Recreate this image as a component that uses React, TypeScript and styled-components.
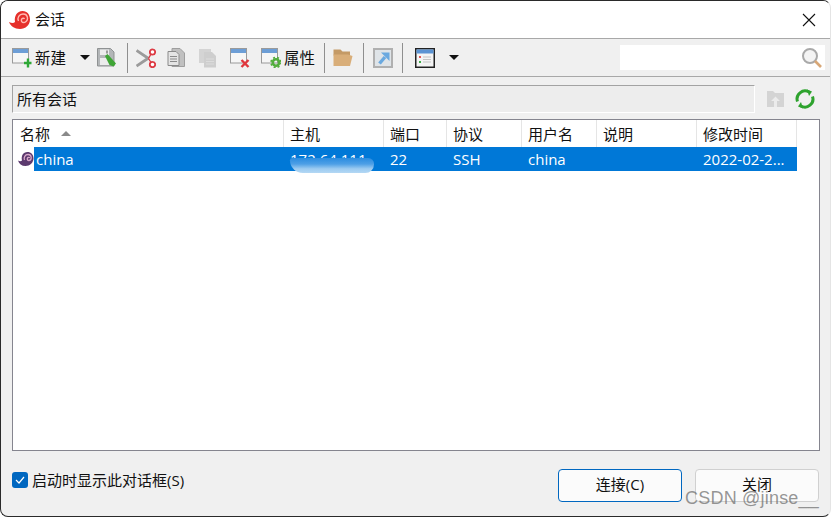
import React from 'react';
import styled, { createGlobalStyle } from 'styled-components';

const GlobalStyle = createGlobalStyle`
  html, body {
    margin: 0;
    padding: 0;
    background: #ffffff;
  }
  body {
    font-family: "Open Sans", "Noto Sans CJK SC", sans-serif;
    font-size: 15px;
    color: #111;
  }
`;

const Desktop = styled.div`
  width: 832px;
  height: 517px;
  background: #fff;
  overflow: hidden;
`;

const Window = styled.div`
  position: relative;
  box-sizing: border-box;
  width: 831px;
  height: 517px;
  display: flex;
  flex-direction: column;
  background: #f0f0f0;
  border: 1px solid #2a2a2a;
  border-right-color: #e4e4e4;
  border-radius: 8px;
  overflow: hidden;
`;

const TitleBar = styled.div`
  height: 37px;
  flex: none;
  display: flex;
  align-items: center;
  padding: 0 8px;
  gap: 4px;
  background: #fff;
  border-bottom: 1px solid #a8a8a8;
`;

const TitleText = styled.span`
  flex: 1;
  font-size: 15px;
  padding-bottom: 2px;
`;

const CloseButton = styled.div`
  width: 14px;
  height: 14px;
  margin-right: 6px;
  display: flex;
`;

const Toolbar = styled.div`
  height: 37px;
  flex: none;
  display: flex;
  align-items: center;
  padding: 0 5px 0 11px;
  border-bottom: 1px solid #a8a8a8;
`;

const ToolIcon = styled.div<{ $mr?: number }>`
  width: 20px;
  height: 20px;
  flex: none;
  margin-right: ${(p) => p.$mr ?? 0}px;
  display: flex;
`;

const ToolLabel = styled.span`
  width: 31px;
  flex: none;
  font-size: 15.5px;
  margin-left: 3px;
  white-space: nowrap;
`;

const Separator = styled.div<{ $l: number; $r: number }>`
  width: 1px;
  height: 30px;
  flex: none;
  background: #8f8f8f;
  margin-left: ${(p) => p.$l}px;
  margin-right: ${(p) => p.$r}px;
`;

const Caret = styled.div<{ $l: number; $r: number }>`
  width: 0;
  height: 0;
  flex: none;
  margin-left: ${(p) => p.$l}px;
  margin-right: ${(p) => p.$r}px;
  border-left: 5px solid transparent;
  border-right: 5px solid transparent;
  border-top: 5px solid #111;
`;

const SearchBox = styled.div`
  margin-left: auto;
  width: 205px;
  height: 25px;
  background: #fff;
  display: flex;
  align-items: center;
  justify-content: flex-end;
  padding-right: 2px;
  box-sizing: border-box;
`;

const PathRow = styled.div`
  flex: none;
  display: flex;
  align-items: center;
  padding: 8px 0 0 11px;
`;

const PathBox = styled.div`
  width: 743px;
  height: 28px;
  box-sizing: border-box;
  background: #ededed;
  border: 1px solid #a3a3a3;
  border-right-color: #fff;
  border-bottom-color: #fff;
  padding-left: 4px;
  font-size: 15px;
  line-height: 26px;
`;

const PathActions = styled.div`
  display: flex;
  align-items: center;
  margin-left: 11px;
  gap: 9px;
`;

const ListPanel = styled.div`
  flex: none;
  margin: 6px 0 0 11px;
  width: 808px;
  height: 332px;
  box-sizing: border-box;
  background: #fff;
  border: 1px solid #85858f;
`;

const HeaderRow = styled.div`
  display: grid;
  grid-template-columns: 271px 100px 63px 75px 75px 100px 100px;
  height: 26px;
  width: 784px;
`;

const HeaderCell = styled.div`
  box-sizing: border-box;
  border-right: 1px solid #e5e5e5;
  padding-left: 6px;
  font-size: 15px;
  line-height: 28px;
  display: flex;
  align-items: center;
  gap: 11px;
  white-space: nowrap;

  &:first-child {
    padding-left: 7px;
  }
`;

const SortArrow = styled.span`
  width: 0;
  height: 0;
  border-left: 5px solid transparent;
  border-right: 5px solid transparent;
  border-bottom: 5px solid #8a8a8a;
  margin-bottom: 2px;
`;

const SessionRow = styled.div`
  position: relative;
  display: flex;
  height: 24px;
  margin-top: 1px;
`;

const RowIcon = styled.div`
  width: 21px;
  flex: none;
  display: flex;
  align-items: center;
  padding-left: 5px;
  box-sizing: border-box;
`;

const Selection = styled.div`
  display: grid;
  grid-template-columns: 250px 100px 63px 75px 75px 100px 100px;
  width: 763px;
  background: #0078d7;
  color: #fff;
`;

const Cell = styled.div<{ $pl?: number }>`
  padding-left: ${(p) => p.$pl ?? 6}px;
  font-size: 15px;
  line-height: 25px;
  white-space: nowrap;
  overflow: hidden;
`;

const Blur = styled.div`
  position: absolute;
  left: 277px;
  top: 11px;
  width: 84px;
  height: 15px;
  background: linear-gradient(180deg, #2a8ce0 0%, #4d9fe6 40%, #9ccbf1 72%, #b4d8f4 100%);
  border-radius: 3px 8px 12px 18px;
`;

const Footer = styled.div`
  flex: 1;
  display: flex;
  align-items: center;
  padding: 3px 11px 0 11px;
`;

const CheckRow = styled.label`
  display: flex;
  align-items: center;
  gap: 4px;
  font-size: 15px;
  margin-bottom: 11px;
`;

const CheckBox = styled.span`
  width: 16px;
  height: 16px;
  border-radius: 3px;
  background: #0067c0;
  display: flex;
  align-items: center;
  justify-content: center;
`;

const DialogButton = styled.div<{ $primary?: boolean }>`
  width: 124px;
  height: 33px;
  box-sizing: border-box;
  margin-left: ${(p) => (p.$primary ? 'auto' : '13px')};
  padding-bottom: 3px;
  border: 1px solid ${(p) => (p.$primary ? '#0067c0' : '#d0d0d0')};
  border-radius: 4px;
  background: #fbfbfb;
  font-size: 15px;
  display: flex;
  align-items: center;
  justify-content: center;
`;

const Watermark = styled.div`
  position: absolute;
  right: 11px;
  bottom: 7px;
  font-family: "Liberation Sans", sans-serif;
  font-size: 18px;
  color: rgba(110, 110, 110, 0.72);
  letter-spacing: 0.2px;
`;

const Shell = () => (
  <svg width="22" height="20" viewBox="0 0 22 20">
    <path d="M0 12c3 1.500 5 1 6 0C5 6 8 1 13.500 1 18.500 1 21 5 21 9.500 21 15 16.500 19 11 19 5.500 19 1.500 16 0 12z" fill="#e6302b" />
    <path d="M9.500 11c-1.500-3 .500-7 4.500-7 3 0 4.500 2 4.500 4.500S16 12.500 14.500 12.500 12 11 12.500 9.500s2.500-1.500 3-.5" fill="none" stroke="#ffb8b0" strokeWidth="1.400" />
  </svg>
);

const RowShell = () => (
  <svg width="16" height="16" viewBox="0 0 16 16">
    <path d="M0 9.500c1.500 1 3 1 4 0C3 5 5 1 9.500 1 13 1 15.500 3.500 15.500 7.500 15.500 11.500 12 15 7.500 15 3.500 15 1 13 0 9.500z" fill="#5c3a6e" />
    <path d="M6.500 9C5.500 6.500 7 3.500 10 3.500c2 0 3.200 1.500 3.200 3.300S12 9.500 10.800 9.500 9 8.500 9.400 7.300s2-1 2.200-.3" fill="none" stroke="#d9a7c9" strokeWidth="1.300" />
  </svg>
);

const WinIcon = ({ badge }: { badge?: React.ReactNode }) => (
  <svg width="20" height="20" viewBox="0 0 20 20">
    <rect x="0.500" y="0.500" width="16" height="14.500" fill="#f6f6f6" stroke="#9a9a9a" />
    <rect x="1" y="1" width="15" height="4" fill="#6d9ed6" />
    {badge}
  </svg>
);

const Save = () => (
  <svg width="20" height="20" viewBox="0 0 20 20">
    <path d="M0.500 0.500h13l3.500 3.500v14H0.500z" fill="#b3b6b8" stroke="#8f9293" />
    <rect x="3" y="1.500" width="9" height="5.500" fill="#ececec" />
    <rect x="9" y="2.500" width="2" height="3" fill="#9a9a9a" />
    <rect x="3" y="10" width="10" height="7" fill="#ececec" />
    <path d="M8 8l2.500-2 8.500 9.500-2.500 3-4-1.500z" fill="#3fa535" />
  </svg>
);

const Cut = () => (
  <svg width="20" height="20" viewBox="0 0 20 20">
    <path d="M0.500 2.500l12 8M0.500 18l12-8" stroke="#9b9b9b" strokeWidth="2.800" fill="none" />
    <circle cx="16.500" cy="4" r="2.700" fill="#fff" stroke="#dd3b44" strokeWidth="1.800" />
    <circle cx="16.500" cy="16.500" r="2.700" fill="#fff" stroke="#dd3b44" strokeWidth="1.800" />
    <path d="M12.500 10.500l2.500-4.500M12.500 10.500l2.500 4" stroke="#dd3b44" strokeWidth="1.400" />
  </svg>
);

const Copy = () => (
  <svg width="20" height="20" viewBox="0 0 20 20">
    <path d="M5 0.500h8l4.500 4.500v13.500H5z" fill="#c0c0c0" stroke="#9e9e9e" />
    <path d="M1 3.500h8l3 3v11H1z" fill="#e4e4e4" stroke="#8a8a8a" />
    <path d="M3 8.500h7M3 11h7M3 13.500h7" stroke="#8a8a8a" />
  </svg>
);

const Paste = () => (
  <svg width="20" height="20" viewBox="0 0 20 20">
    <rect x="1" y="1" width="12" height="14" fill="#d4d4d4" />
    <path d="M6 4h8l4 4v11.500H6z" fill="#cecece" />
    <path d="M8 11h8M8 13.500h8M8 16h8" stroke="#dcdcdc" />
  </svg>
);

const Folder = () => (
  <svg width="20" height="20" viewBox="0 0 20 20">
    <path d="M0.500 1.500h7l2 2h7.500v4H0.500z" fill="#c49a66" />
    <path d="M0.500 18V6.500h14.500l4.500 1.500-2.500 10z" fill="#d9ae79" />
  </svg>
);

const Shortcut = () => (
  <svg width="20" height="20" viewBox="0 0 20 20">
    <rect x="1" y="1" width="18" height="18" fill="#dfe4e8" stroke="#b0b0b0" strokeWidth="2" />
    <path d="M6.500 15.500L12 9" stroke="#6aa9e0" strokeWidth="3.400" />
    <path d="M8 4.500h8.500V13z" fill="#6aa9e0" />
  </svg>
);

const ViewIcon = () => (
  <svg width="20" height="20" viewBox="0 0 20 20">
    <rect x="0.750" y="0.750" width="18.500" height="18.500" fill="#f4f4f4" stroke="#222" strokeWidth="1.500" />
    <rect x="1.500" y="1.500" width="17" height="4" fill="#5b93d3" />
    <rect x="4" y="8" width="2" height="2" fill="#e25555" />
    <rect x="4" y="13" width="2" height="2" fill="#3fae49" />
    <path d="M8 9h8M8 11.500h8M8 14h8" stroke="#c4c4c4" />
  </svg>
);

const SearchIcon = () => (
  <svg width="22" height="22" viewBox="0 0 22 22">
    <circle cx="9" cy="9" r="7" fill="#f4f4f4" stroke="#a9a9a9" strokeWidth="2" />
    <path d="M14 14l6 6" stroke="#d8a777" strokeWidth="2.600" />
  </svg>
);

const UploadFolder = () => (
  <svg width="20" height="20" viewBox="0 0 20 20">
    <path d="M1 2h6l2 2h9v14H1z" fill="#d4d4d4" />
    <path d="M9.500 7.500l4.500 4.500h-3v6H8v-6H5z" fill="#ececec" />
  </svg>
);

const Refresh = () => (
  <svg width="20" height="20" viewBox="0 0 20 20" fill="none" stroke="#2ea32e" strokeWidth="3">
    <path d="M2.500 12.500A8 8 0 0 1 14 3" />
    <path d="M17.500 7.500A8 8 0 0 1 6 17" />
    <path d="M12 0.500l5 2-3 4.500z" fill="#2ea32e" stroke="none" />
    <path d="M8 19.500l-5-2 3-4.500z" fill="#2ea32e" stroke="none" />
  </svg>
);

const App: React.FC = () => (
  <Desktop>
    <GlobalStyle />
    <Window>
      <TitleBar>
        <Shell />
        <TitleText>会话</TitleText>
        <CloseButton>
          <svg width="14" height="14" viewBox="0 0 14 14">
            <path d="M1 1l12 12M13 1L1 13" stroke="#111" strokeWidth="1.100" />
          </svg>
        </CloseButton>
      </TitleBar>
      <Toolbar>
        <ToolIcon>
          <WinIcon badge={<path d="M12 15h7.500M16 10.500v9" stroke="#2ea836" strokeWidth="2.400" />} />
        </ToolIcon>
        <ToolLabel>新建</ToolLabel>
        <Caret $l={14} $r={7} />
        <ToolIcon><Save /></ToolIcon>
        <Separator $l={10} $r={8} />
        <ToolIcon $mr={11}><Cut /></ToolIcon>
        <ToolIcon $mr={11}><Copy /></ToolIcon>
        <ToolIcon $mr={12}><Paste /></ToolIcon>
        <ToolIcon $mr={11}>
          <WinIcon badge={<path d="M11.500 12l7 7M18.500 12l-7 7" stroke="#e0363c" strokeWidth="2.400" />} />
        </ToolIcon>
        <ToolIcon>
          <WinIcon
            badge={
              <g fill="none" stroke="#53ad3d">
                <circle cx="15" cy="14.500" r="3.200" strokeWidth="2.600" />
                <circle cx="15" cy="14.500" r="5" strokeWidth="1.600" strokeDasharray="2 2" />
              </g>
            }
          />
        </ToolIcon>
        <ToolLabel>属性</ToolLabel>
        <Separator $l={9} $r={8} />
        <ToolIcon><Folder /></ToolIcon>
        <Separator $l={10} $r={9} />
        <ToolIcon><Shortcut /></ToolIcon>
        <Separator $l={9} $r={12} />
        <ToolIcon><ViewIcon /></ToolIcon>
        <Caret $l={14} $r={0} />
        <SearchBox><SearchIcon /></SearchBox>
      </Toolbar>
      <PathRow>
        <PathBox>所有会话</PathBox>
        <PathActions>
          <UploadFolder />
          <Refresh />
        </PathActions>
      </PathRow>
      <ListPanel>
        <HeaderRow>
          <HeaderCell>名称<SortArrow /></HeaderCell>
          <HeaderCell>主机</HeaderCell>
          <HeaderCell>端口</HeaderCell>
          <HeaderCell>协议</HeaderCell>
          <HeaderCell>用户名</HeaderCell>
          <HeaderCell>说明</HeaderCell>
          <HeaderCell>修改时间</HeaderCell>
        </HeaderRow>
        <SessionRow>
          <RowIcon><RowShell /></RowIcon>
          <Selection>
            <Cell $pl={2}>china</Cell>
            <Cell>172.64.111.</Cell>
            <Cell>22</Cell>
            <Cell>SSH</Cell>
            <Cell>china</Cell>
            <Cell />
            <Cell>2022-02-2...</Cell>
          </Selection>
          <Blur />
        </SessionRow>
      </ListPanel>
      <Footer>
        <CheckRow>
          <CheckBox>
            <svg width="10" height="8" viewBox="0 0 10 8">
              <path d="M1 4l3 3 5-6" stroke="#fff" strokeWidth="1.200" fill="none" />
            </svg>
          </CheckBox>
          启动时显示此对话框(S)
        </CheckRow>
        <DialogButton $primary>连接(C)</DialogButton>
        <DialogButton>关闭</DialogButton>
      </Footer>
      <Watermark>CSDN @jinse__</Watermark>
    </Window>
  </Desktop>
);

export default App;
